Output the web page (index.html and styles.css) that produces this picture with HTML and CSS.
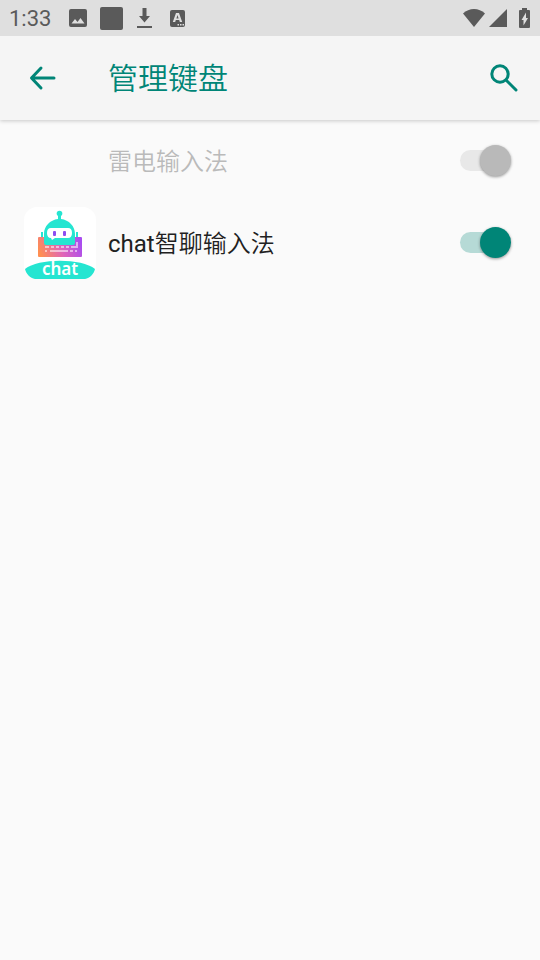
FILE: index.html
```html
<!DOCTYPE html>
<html lang="zh-CN">
<head>
<meta charset="utf-8">
<meta name="viewport" content="width=device-width, initial-scale=1">
<title>管理键盘</title>
<link rel="stylesheet" href="styles.css">
</head>
<body>
<div class="status">
  <time class="clock">1:33</time>
  <div class="notices">
    <svg class="glyph" width="18" height="18" viewBox="0 0 18 18"><path fill-rule="evenodd" d="M2 0h14a2 2 0 0 1 2 2v14a2 2 0 0 1-2 2H2a2 2 0 0 1-2-2V2a2 2 0 0 1 2-2ZM2.500 14.500h13l-4-5.500-3 4-2.500-3Z"/></svg>
    <svg class="glyph" width="23" height="23" viewBox="0 0 23 23"><rect width="23" height="23" rx="2"/></svg>
    <svg class="glyph" width="15" height="20" viewBox="0 0 15 20"><path d="M5.500 0h4v8h3.500L7.500 14.500 2 8h3.500ZM0 18h15v2H0Z"/></svg>
    <svg class="glyph" width="15" height="17" viewBox="0 0 15 17"><rect width="15" height="17" rx="2"/><path class="cutout" fill-rule="evenodd" d="M6 3h3l3.200 9H9.800l-.6-2H5.800l-.6 2H2.800ZM7.500 5 6.400 8.400h2.200ZM7.500 14H9v1.500H7.500ZM10 14h1.500v1.500H10ZM12.500 14H14v1.500h-1.500Z"/></svg>
  </div>
  <div class="signals">
    <svg class="glyph" width="22" height="18" viewBox="0 0 22 18"><path d="M11 18 0 4.500C6-1.500 16-1.500 22 4.500Z"/></svg>
    <svg class="glyph" width="18" height="18" viewBox="0 0 18 18"><path d="M18 0v18H0Z"/></svg>
    <svg class="glyph battery" width="11" height="20" viewBox="0 0 11 20"><path d="M3 0h5v2h2a1 1 0 0 1 1 1v16a1 1 0 0 1-1 1H1a1 1 0 0 1-1-1V3a1 1 0 0 1 1-1h2Z"/><path class="cutout" d="M7 4.500v5.500H9L4.500 17.500V12H2.500Z"/></svg>
  </div>
</div>
<header class="toolbar">
  <button class="icon-button" type="button" aria-label="返回">
    <svg width="36" height="36" viewBox="0 0 36 36"><path class="stroke" d="M30 18H8M17 8 7.500 18 17 28"/></svg>
  </button>
  <h1 class="title">管理键盘</h1>
  <button class="icon-button" type="button" aria-label="搜索">
    <svg width="36" height="36" viewBox="0 0 36 36"><circle class="stroke" cx="14" cy="14" r="8.200"/><path class="stroke" d="m20.500 20.500 9.500 9.500"/></svg>
  </button>
</header>
<main class="list">
  <div class="row">
    <span class="app-icon"></span>
    <label class="name disabled" for="leidian">雷电输入法</label>
    <input class="switch" type="checkbox" role="switch" id="leidian" checked disabled>
  </div>
  <div class="row">
    <svg class="app-icon" viewBox="0 0 72 72">
      <defs>
        <linearGradient id="keys" x1="0" y1="0.600" x2="1" y2="0.400"><stop offset="0" stop-color="#ff8f52"/><stop offset="0.500" stop-color="#e065b8"/><stop offset="1" stop-color="#a94df0"/></linearGradient>
      </defs>
      <rect width="72" height="72" rx="13" fill="#fff"/>
      <rect x="14" y="30" width="44" height="20" rx="1" fill="url(#keys)"/>
      <path d="M21 40h4M27 40h3M32 40h3M37 40h3M42 40h3M47 40h7M21 44h2M26 44h18M46 44h3M51 44h2M53 35v5" fill="none" stroke="#fff" stroke-opacity=".55" stroke-width="2"/>
      <g fill="#25e5d1">
        <path d="M20 36V27c0-8 6-14 14-15V9h3v3c8 1 14 7 14 15v9q0 2-2 2H22q-2 0-2-2Z"/>
        <circle cx="35.500" cy="6.500" r="2.800"/>
        <rect x="17" y="25" width="2" height="5"/><rect x="52" y="25" width="2" height="5"/>
        <path d="M1 62C14 51 58 51 71 62C70 67 66 71 61 72H11C6 71 2 67 1 62Z"/>
      </g>
      <path d="M27 21h17q4 0 4 5t-4 5H31l-3 2-1-2q-4 0-4-5t4-5Z" fill="#fff"/>
      <rect x="29" y="24" width="3" height="5" rx="1" fill="#8c4df0"/><rect x="39" y="24" width="3" height="5" rx="1" fill="#8c4df0"/>
      <text class="logo-word" x="36" y="68" text-anchor="middle">chat</text>
    </svg>
    <label class="name" for="zhiliao">chat<span class="han">智聊输入法</span></label>
    <input class="switch" type="checkbox" role="switch" id="zhiliao" checked>
  </div>
</main>
</body>
</html>
```
FILE: styles.css
```css
* { box-sizing: border-box; }

body {
  margin: 0;
  background: #fafafa;
  color: #212121;
  font-family: Roboto, "Noto Sans CJK SC", sans-serif;
}

.status {
  display: flex;
  align-items: center;
  height: 36px;
  padding: 0 10px 0 9px;
  background: #dfdfdf;
  color: #5a5a5a;
  position: relative;
  z-index: 1;
}

.clock {
  width: 60px;
  padding-top: 2px;
  font-size: 22px;
  line-height: 34px;
}

.notices {
  display: flex;
  flex: 1;
  align-items: center;
  gap: 14px;
}

.notices .glyph:first-child { margin-right: -1px; }
.notices .glyph:last-child { margin-left: 4px; }

.signals {
  display: flex;
  align-items: center;
  gap: 4px;
}

.signals { padding-bottom: 1px; }

.glyph {
  display: block;
  fill: #5a5a5a;
}

.battery { margin-left: 8px; }

.cutout { fill: #dfdfdf; }

.toolbar {
  display: flex;
  align-items: center;
  height: 84px;
  padding: 0 18px 0 24px;
  background: #f5f5f5;
  box-shadow: 0 1px 4px rgba(0, 0, 0, 0.2);
  color: #008577;
}

.icon-button {
  width: 36px;
  height: 36px;
  padding: 0;
  border: 0;
  background: none;
  color: inherit;
}

.icon-button svg { display: block; }

.stroke {
  fill: none;
  stroke: currentColor;
  stroke-width: 3;
  stroke-linecap: round;
  stroke-linejoin: round;
}

.title {
  flex: 1;
  margin: 0 0 0 48px;
  padding-top: 2px;
  font-size: 30px;
  font-weight: 350;
  line-height: 44px;
}

.row {
  display: flex;
  align-items: center;
  gap: 12px;
  height: 82px;
  padding: 0 29px 0 24px;
}

.app-icon {
  flex: none;
  width: 72px;
  height: 72px;
}

.logo-word {
  fill: #fff;
  font: 600 17px "Noto Sans", sans-serif;
}

.name {
  flex: 1;
  padding-top: 2px;
  font-size: 24px;
  line-height: 36px;
}

.han,
.disabled { font-weight: 350; }

.disabled { color: #bababa; }

.switch {
  display: grid;
  align-items: center;
  width: 51px;
  height: 31px;
  margin: 0 0 2px;
  appearance: none;
}

.switch::before,
.switch::after {
  content: "";
  grid-area: 1 / 1;
}

.switch::before {
  width: 40px;
  height: 21px;
  border-radius: 11px;
  background: #b6dad6;
}

.switch::after {
  justify-self: end;
  width: 31px;
  height: 31px;
  border-radius: 50%;
  background: #008577;
  box-shadow: 0 1px 3px rgba(0, 0, 0, 0.4);
}

.switch:disabled::before { background: #e8e8e8; }

.switch:disabled::after { background: #b9b9b9; }
```
